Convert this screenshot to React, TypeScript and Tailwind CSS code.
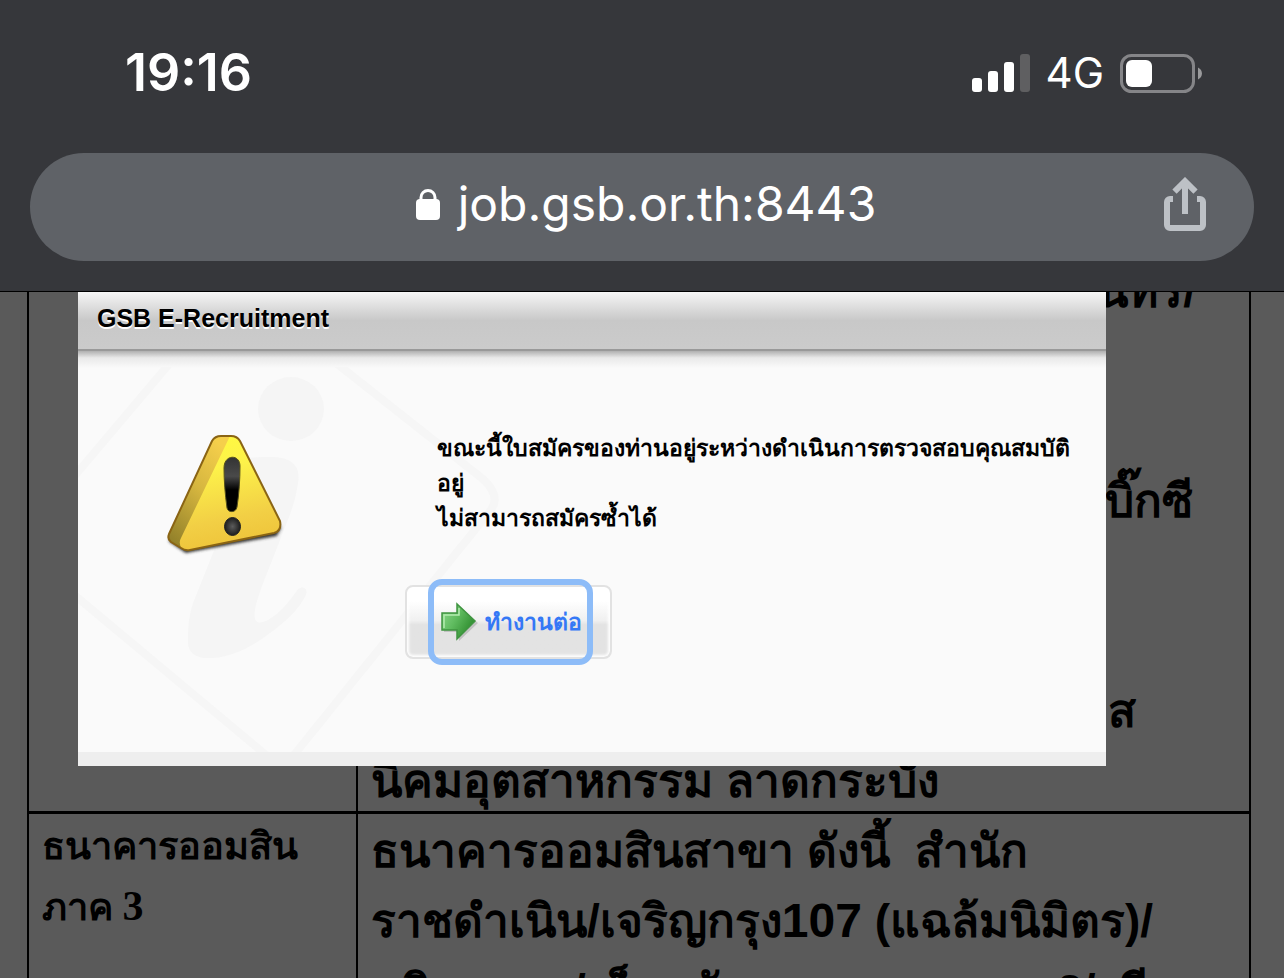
import React from "react";

const BarsIcon = () => (
  <svg width="58" height="38" viewBox="0 0 58 38" fill="#fff" aria-hidden="true">
    <rect x="0" y="24" width="10" height="14" rx="3" />
    <rect x="16" y="17" width="10" height="21" rx="3" />
    <rect x="32" y="8" width="10" height="30" rx="3" />
    <rect x="48" y="0" width="10" height="38" rx="3" fill="#5f5f61" />
  </svg>
);

const BatteryIcon = () => (
  <svg width="82" height="39" viewBox="0 0 82 39" aria-hidden="true">
    <rect
      x="1.5"
      y="1.5"
      width="72"
      height="36"
      rx="10"
      fill="none"
      stroke="#858588"
      strokeWidth="3"
    />
    <rect x="6" y="6" width="26" height="27" rx="6" fill="#fff" />
    <path d="M78 13.500c5.300 2.500 5.300 9.500 0 12z" fill="#9a9a9c" />
  </svg>
);

const LockIcon = () => (
  <svg width="24" height="31" viewBox="0 0 24 31" aria-hidden="true">
    <path d="M5 13V8.500a7 7 0 0 1 14 0V13" fill="none" stroke="#fff" strokeWidth="3" />
    <rect x="0" y="10" width="24" height="21" rx="4" fill="#fff" />
  </svg>
);

const ShareIcon = () => (
  <svg
    width="42"
    height="54"
    viewBox="0 0 42 54"
    fill="none"
    stroke="#bdc1c6"
    strokeWidth="6"
    aria-hidden="true"
  >
    <path d="M9 22H6a3 3 0 0 0-3 3v23a3 3 0 0 0 3 3h30a3 3 0 0 0 3-3V25a3 3 0 0 0-3-3h-3" />
    <path d="M21 37V5" />
    <path d="M10.500 14.700L21 4.200l10.500 10.500" />
  </svg>
);

const InfoWatermark = () => (
  <svg
    className="absolute bottom-0 left-0"
    width="440"
    height="385"
    viewBox="0 0 440 385"
    aria-hidden="true"
  >
    <path
      d="M92 -4L-6 112M258 -4L405 112Q424 130 412 144L216 388M-6 226L188 388"
      fill="none"
      stroke="#f6f6f6"
      strokeWidth="8"
    />
    <ellipse cx="213" cy="42" rx="33" ry="32" fill="#f5f5f5" />
    <path
      d="M150 95C170 90 182 90 192 90C215 90 223 100 220 116C217 138 210 152 202 173C192 200 180 226 177 243C175 256 180 258 190 253C204 245 213 232 220 222C226 218 230 222 228 228C220 244 206 256 192 266C174 280 154 290 135 291C118 292 109 286 110 273C110 258 111 249 115 236L135 186L160 120C164 108 156 102 150 95Z"
      fill="#f5f5f5"
    />
  </svg>
);

const WarningIcon = () => (
  <svg width="120" height="128" viewBox="0 0 120 128" aria-hidden="true">
    <defs>
      <linearGradient id="face" x1="0" y1="0" x2="0.200" y2="1">
        <stop offset="0" stopColor="#fffb3e" />
        <stop offset="0.350" stopColor="#fdf24a" />
        <stop offset="0.800" stopColor="#f2cf45" />
        <stop offset="1" stopColor="#efc63c" />
      </linearGradient>
      <linearGradient id="side" x1="0.700" y1="0" x2="0.200" y2="1">
        <stop offset="0" stopColor="#f5cf4b" />
        <stop offset="0.450" stopColor="#d6b63f" />
        <stop offset="1" stopColor="#93812a" />
      </linearGradient>
      <linearGradient id="mark" x1="0" y1="0" x2="0" y2="1">
        <stop offset="0" stopColor="#333" />
        <stop offset="0.350" stopColor="#4a4a4a" />
        <stop offset="0.600" stopColor="#000" />
      </linearGradient>
      <radialGradient id="dot">
        <stop offset="0" stopColor="#5c5c5c" />
        <stop offset="1" stopColor="#1d1d1d" />
      </radialGradient>
      <filter id="soft" x="-10%" y="-10%" width="120%" height="120%">
        <feGaussianBlur stdDeviation="1.500" />
      </filter>
    </defs>
    <path
      d="M6 111L22 122L112 105L116 98L104 85L14 95Z"
      fill="#333"
      stroke="#333"
      strokeWidth="2"
      filter="url(#soft)"
    />
    <path
      d="M5 104L48 11Q51 6 57 6H67Q73 6 76 11L116 91Q118 101 110 103L26 120Q21 121 17 118L7 112Q3 109 5 104Z"
      fill="url(#face)"
    />
    <path d="M5 104L48 11Q51 6 57 6H66L17 108Q14 113 18 119L7 112Q3 109 5 104Z" fill="url(#side)" />
    <path
      d="M5 104L48 11Q51 6 57 6H67Q73 6 76 11L116 91Q118 101 110 103L26 120Q21 121 17 118L7 112Q3 109 5 104Z"
      fill="none"
      stroke="#8a6414"
      strokeWidth="2"
    />
    <path
      d="M60 38C60 24 76 24 76 36C76 50 75 64 73 77C72 83 64 83 63 78C61 64 60 50 60 38Z"
      fill="url(#mark)"
      stroke="#55501c"
    />
    <ellipse cx="68.500" cy="96.500" rx="8" ry="9" fill="url(#dot)" stroke="#222" />
  </svg>
);

const ArrowIcon = () => (
  <svg width="38" height="40" viewBox="0 0 38 40" aria-hidden="true">
    <defs>
      <linearGradient id="arrow" x1="0" y1="0" x2="1" y2="0.600">
        <stop offset="0" stopColor="#8fd98f" />
        <stop offset="0.500" stopColor="#5fbb5f" />
        <stop offset="1" stopColor="#2c8a2c" />
      </linearGradient>
    </defs>
    <path d="M3 13H18V4L37 21L18 39V30H3Z" fill="#000" opacity="0.150" />
    <path d="M1 11H16V2L34 19L16 37V28H1Z" fill="url(#arrow)" stroke="#3f9440" strokeWidth="1.500" />
    <path d="M3 26V13H18V6" fill="none" stroke="#b4ecb0" strokeWidth="1.500" />
  </svg>
);

const StatusBar = () => (
  <div className="flex h-[153px] items-start justify-between pt-[45px] pr-[82px] pl-[125px]">
    <span className="text-[52px] leading-[56px] font-semibold">19:16</span>
    <div className="flex h-[56px] items-center gap-4">
      <BarsIcon />
      <span className="text-[42px] leading-[56px]">4G</span>
      <BatteryIcon />
    </div>
  </div>
);

const AddressBar = () => (
  <div className="mx-[30px] grid h-[108px] grid-cols-[1fr_auto_1fr] items-center rounded-full bg-[#5f6267] px-12 pb-[6px]">
    <button className="col-start-2 flex items-center gap-[18px] pl-2 text-[48px] leading-[60px]">
      <LockIcon />
      job.gsb.or.th:8443
    </button>
    <button aria-label="Share" className="justify-self-end">
      <ShareIcon />
    </button>
  </div>
);

const BranchTable = () => (
  <table className="-mt-[36px] mr-[33px] ml-[27px] w-[calc(100%-60px)] table-fixed border-collapse font-bold text-black">
    <colgroup>
      <col className="w-[329px]" />
      <col />
    </colgroup>
    <tbody className="align-top">
      <tr>
        <td className="border-x-2 border-b-[3px] border-black" />
        <td className="border-x-2 border-b-[3px] border-black px-[13px] font-['Liberation_Sans',sans-serif] text-[46px] leading-[70px] whitespace-nowrap">
          <p className="pr-[40px] text-right">นทร์/</p>
          <p className="mt-[140px] pr-[43px] text-right">บิ๊กซี</p>
          <p className="mt-[140px] pr-[100px] text-right">ส</p>
          <p className="pt-[5px] leading-[60px]">นิคมอุตสาหกรรม ลาดกระบัง</p>
        </td>
      </tr>
      <tr>
        <td className="border-x-2 border-black px-[13px] pt-[2px] font-['Liberation_Serif',serif] text-[38px] leading-[60px]">
          <p>ธนาคารออมสิน</p>
          <p>
            ภาค <span className="text-[42px]">3</span>
          </p>
        </td>
        <td className="border-x-2 border-black px-[13px] pt-[2px] font-['Liberation_Sans',sans-serif] text-[46px] leading-[70px] whitespace-pre">
          <p>ธนาคารออมสินสาขา ดังนี้  สำนัก</p>
          <p>
            ราชดำเนิน/เจริญกรุง<span className="text-[48px]">107</span> (แฉล้มนิมิตร)/
          </p>
          <p>นลินทราค/เซ็นทรัลพระราม  สาขา 2/สุรี</p>
        </td>
      </tr>
    </tbody>
  </table>
);

const RecruitmentDialog = () => (
  <div
    role="dialog"
    aria-labelledby="dialog-title"
    className="absolute top-0 right-[178px] left-[78px] border-b-[14px] border-[#eee] bg-[#fafafa] text-black"
  >
    <h1
      id="dialog-title"
      className="h-[59px] border-b-2 border-[#999] bg-linear-to-b from-[#f6f6f6] via-[#c8c8c8] via-50% to-[#cbcbcb] px-[19px] font-['Liberation_Sans',sans-serif] text-[25px] leading-[52px] font-bold text-shadow-[0_2px_0_#fff]"
    >
      GSB E-Recruitment
    </h1>
    <div className="h-[17px] bg-linear-to-b from-[#b0b0b0] via-[#e9e9e9] via-40% to-[#fafafa]" />
    <InfoWatermark />
    <div className="relative grid h-[384px] grid-cols-[359px_1fr]">
      <div className="pt-[62px] pl-[86px]">
        <WarningIcon />
      </div>
      <div className="pt-[63px]">
        <p className="font-['Liberation_Sans',sans-serif] text-[23px] leading-[35px] font-bold whitespace-nowrap">
          ขณะนี้ใบสมัครของท่านอยู่ระหว่างดำเนินการตรวจสอบคุณสมบัติ
          <br />
          อยู่
          <br />
          ไม่สามารถสมัครซ้ำได้
        </p>
        <div className="mt-[49px] -ml-8 flex h-[74px] w-[207px] items-center rounded-lg border-2 border-[#e2e2e2] bg-linear-to-b from-white from-20% via-[#f0f0f0] via-48% to-[#e3e3e3] to-54% pl-[21px] inset-shadow-[0_0_3px_2px_#fff]">
          <button className="flex h-[86px] w-[165px] shrink-0 items-center gap-[6px] rounded-[14px] border-[6px] border-[#8dbcf8] pl-[7px] font-['Liberation_Sans',sans-serif] text-[23px] leading-[35px] font-bold whitespace-nowrap text-[#3478f6]">
            <ArrowIcon />
            ทำงานต่อ
          </button>
        </div>
      </div>
    </div>
  </div>
);

const App = () => {
  return (
    <div className="flex h-screen flex-col overflow-hidden bg-[#5a5a5a]">
      <header className="shrink-0 border-b border-black bg-[#36373b] pb-[30px] font-['Inter',sans-serif] text-white">
        <StatusBar />
        <AddressBar />
      </header>
      <main className="relative flex-1 overflow-hidden">
        <BranchTable />
        <RecruitmentDialog />
      </main>
    </div>
  );
};

export default App;
